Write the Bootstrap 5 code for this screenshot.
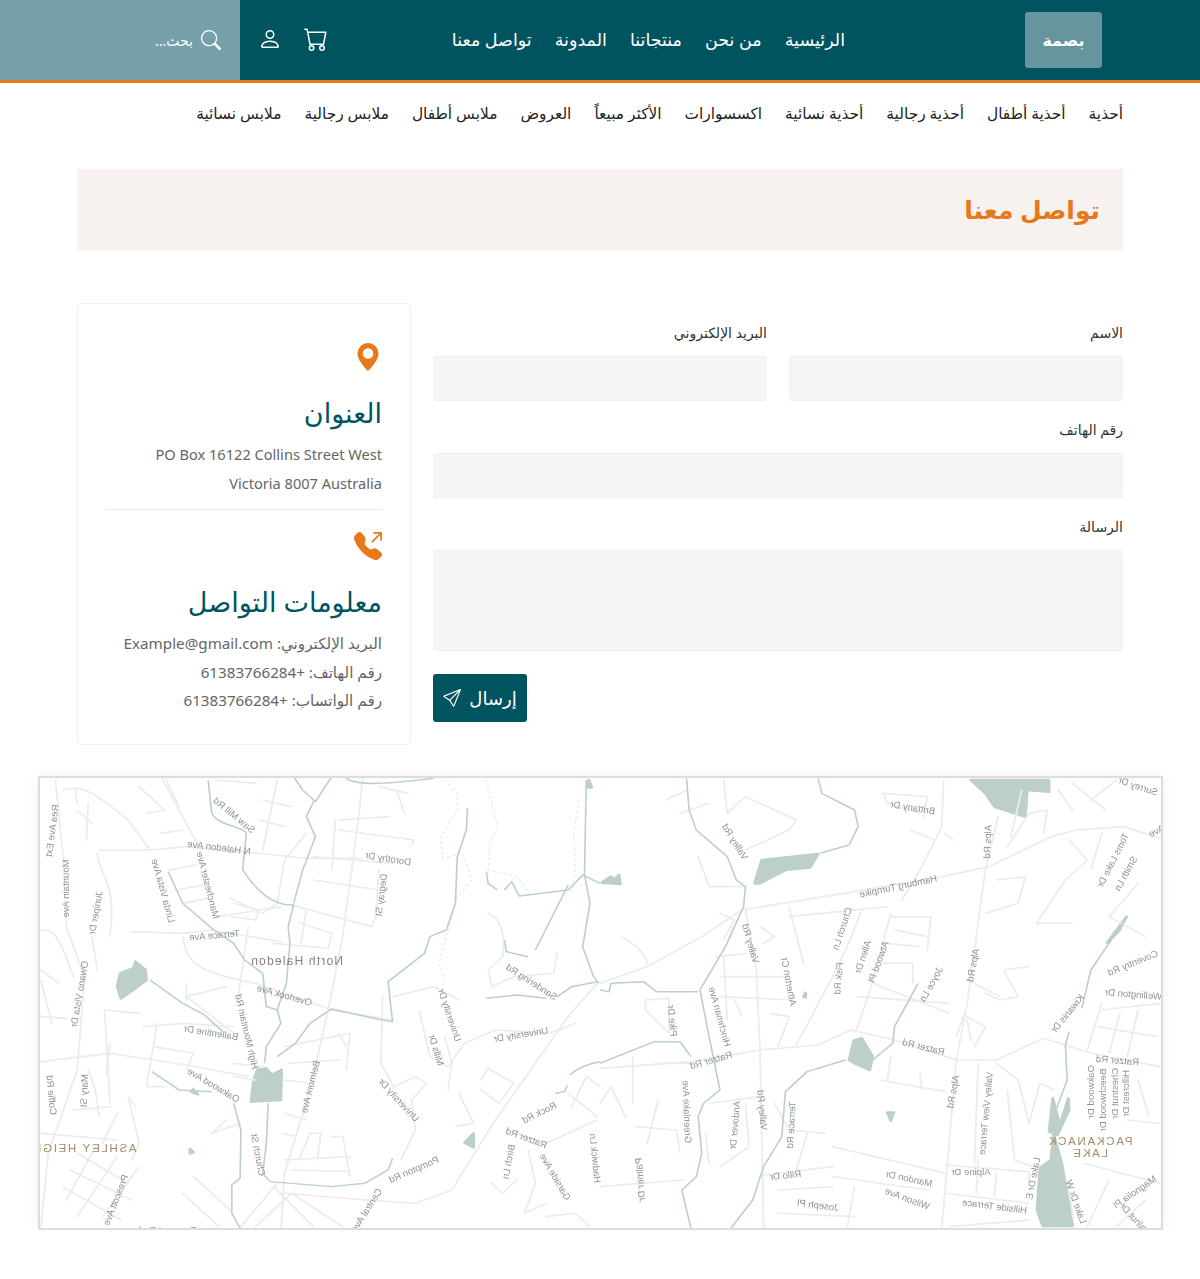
<!DOCTYPE html>
<html lang="ar" dir="rtl">
<head>
    <meta charset="UTF-8">
    <meta name="viewport" content="width=device-width, initial-scale=1.0">
    <title>تواصل معنا</title>
    <link href="https://cdn.jsdelivr.net/npm/bootstrap@5.3.0/dist/css/bootstrap.min.css" rel="stylesheet">
    <style>
        body { font-family: "Noto Sans", "DejaVu Sans", sans-serif; color: #222; background: #fff; }
        a { text-decoration: none; color: inherit; }

        .top-bar { height: 83px; background: #00545f; border-bottom: 3px solid #e8791a; }
        .brand-btn { width: 77px; height: 56px; margin-right: 98px; background: #66959f; border-radius: 3px; color: #fff; font-weight: 700; font-size: 16px; }
        .main-links { margin-right: 180px; gap: 23px; color: #fff; font-size: 17.5px; padding-bottom: 2px; }
        .top-icons { margin-right: auto; gap: 22px; padding-left: 18px; padding-bottom: 3px; color: #fff; }
        .search-box { width: 240px; height: 80px; background: #76a0aa; color: #fff; font-size: 14px; padding-right: 19px; gap: 8px; }

        .sub-links { height: 60px; padding: 2px 77px 0; gap: 23px; font-size: 15.4px; color: #222; }

        .page-wrap { width: 1046px; margin: 26px auto 0; }
        .title-band { height: 82px; background: #f7f2ef; padding: 0 23px 2px; margin-bottom: 52px; }
        .title-band h2 { color: #e8791a; font-size: 25px; font-weight: 700; margin: 0; }

        .gap-row { --bs-gutter-x: 22px; --bs-gutter-y: 0; }
        .form-side { padding-top: 20px; }
        .field-label { font-size: 14px; color: #333; margin-bottom: 13px; line-height: 20px; display: block; }
        .field-input { height: 45px; background: #f5f5f5; border: 1px solid #f0f0f0; border-radius: 3px; margin-bottom: 19px; }
        .field-area { height: 101px; resize: none; }
        .send-btn { width: 94px; height: 48px; background: #00545f; color: #fff; font-size: 18px; border-radius: 3px; border: 0; gap: 8px; margin-top: 4px; }

        .info-box { height: 442px; border: 1px solid #f1f1f1; border-radius: 4px; padding: 39px 28px 0; }
        .info-box h4 { color: #00545f; font-size: 27px; font-weight: 400; margin: 0 0 9px; line-height: 36px; }
        .info-box p { color: #666; font-size: 14.6px; line-height: 28.5px; margin: 0; }
        .info-box p.contact-line { font-size: 15.2px; }
        .info-icon { display: block; fill: #e8791a; margin-bottom: 24px; }
        .info-line { border-top: 1px solid #ebebeb; margin: 12px 0 22px; }

        .map-frame { width: 1125px; height: 454px; margin: 31px auto 0; border: 2px solid #ddd; box-shadow: 0 0 12px rgba(0, 0, 0, .06); overflow: hidden; }
        .map-frame svg { display: block; direction: ltr; filter: blur(.3px); }
        .m-road path { fill: none; stroke: #e9edeb; stroke-width: 5; stroke-linejoin: round; stroke-linecap: round; }
        .m-stream path { fill: none; stroke: #bcd0cb; stroke-width: 4.5; stroke-linejoin: round; }
        .m-trail path { fill: none; stroke: #e4e9e7; stroke-width: 3; stroke-dasharray: 9 7; }
        .m-water path { fill: #bccfca; stroke: #bccfca; stroke-width: 8; stroke-linejoin: round; }
        .m-label text { font-family: "Liberation Sans", sans-serif; font-size: 9.6px; fill: #8f9493; text-anchor: middle; dominant-baseline: central; }
        .m-label text.m-town { font-size: 12px; letter-spacing: 1.2px; fill: #8a8177; }
        .m-label text.m-area { font-size: 11.5px; letter-spacing: 1.7px; fill: #a58a6c; }
        .m-label text.m-clip { text-anchor: start; }
    </style>
</head>
<body>
    <header class="top-bar d-flex align-items-center">
        <a href="#" class="brand-btn d-flex align-items-center justify-content-center flex-shrink-0">بصمة</a>
        <nav class="main-links d-flex">
            <a href="#">الرئيسية</a>
            <a href="#">من نحن</a>
            <a href="#">منتجاتنا</a>
            <a href="#">المدونة</a>
            <a href="#">تواصل معنا</a>
        </nav>
        <div class="top-icons d-flex align-items-center">
            <svg width="24" height="24" viewBox="0 0 16 16" fill="currentColor"><path d="M0 1.5A.5.5 0 0 1 .5 1H2a.5.5 0 0 1 .485.379L2.89 3H14.5a.5.5 0 0 1 .491.592l-1.5 8A.5.5 0 0 1 13 12H4a.5.5 0 0 1-.491-.408L2.01 3.607 1.61 2H.5a.5.5 0 0 1-.5-.5zM3.102 4l1.313 7h8.17l1.313-7H3.102zM5 12a2 2 0 1 0 0 4 2 2 0 0 0 0-4zm7 0a2 2 0 1 0 0 4 2 2 0 0 0 0-4zm-7 1a1 1 0 1 1 0 2 1 1 0 0 1 0-2zm7 0a1 1 0 1 1 0 2 1 1 0 0 1 0-2z"/></svg>
            <svg width="24" height="24" viewBox="0 0 16 16" fill="currentColor"><path d="M8 8a3 3 0 1 0 0-6 3 3 0 0 0 0 6zm2-3a2 2 0 1 1-4 0 2 2 0 0 1 4 0zm4 8c0 1-1 1-1 1H3s-1 0-1-1 1-4 6-4 6 3 6 4zm-1-.004c-.001-.246-.154-.986-.832-1.664C11.516 10.68 10.289 10 8 10c-2.29 0-3.516.68-4.168 1.332-.678.678-.83 1.418-.832 1.664h10z"/></svg>
        </div>
        <div class="search-box d-flex align-items-center flex-shrink-0">
            <svg width="20" height="20" viewBox="0 0 16 16" fill="currentColor"><path d="M11.742 10.344a6.5 6.5 0 1 0-1.397 1.398h-.001c.03.04.062.078.098.115l3.85 3.85a1 1 0 0 0 1.415-1.414l-3.85-3.85a1.007 1.007 0 0 0-.115-.1zM12 6.5a5.5 5.5 0 1 1-11 0 5.5 5.5 0 0 1 11 0z"/></svg>
            <span>بحث...</span>
        </div>
    </header>

    <nav class="sub-links d-flex align-items-center">
        <a href="#">أحذية</a>
        <a href="#">أحذية أطفال</a>
        <a href="#">أحذية رجالية</a>
        <a href="#">أحذية نسائية</a>
        <a href="#">اكسسوارات</a>
        <a href="#">الأكثر مبيعاً</a>
        <a href="#">العروض</a>
        <a href="#">ملابس أطفال</a>
        <a href="#">ملابس رجالية</a>
        <a href="#">ملابس نسائية</a>
    </nav>

    <main class="page-wrap">
        <div class="title-band d-flex align-items-center">
            <h2>تواصل معنا</h2>
        </div>

        <div class="row gap-row">
            <div class="col-8">
                <form class="form-side">
                    <div class="row gap-row">
                        <div class="col-6">
                            <label class="field-label">الاسم</label>
                            <input class="form-control field-input" type="text">
                        </div>
                        <div class="col-6">
                            <label class="field-label">البريد الإلكتروني</label>
                            <input class="form-control field-input" type="email">
                        </div>
                        <div class="col-12">
                            <label class="field-label">رقم الهاتف</label>
                            <input class="form-control field-input" type="text">
                        </div>
                        <div class="col-12">
                            <label class="field-label">الرسالة</label>
                            <textarea class="form-control field-input field-area"></textarea>
                        </div>
                    </div>
                    <button type="button" class="send-btn d-flex align-items-center justify-content-center me-auto">
                        <span>إرسال</span>
                        <svg width="18" height="18" viewBox="0 0 16 16" fill="currentColor"><path d="M15.854.146a.5.5 0 0 1 .11.54l-5.819 14.547a.75.75 0 0 1-1.329.124l-3.178-4.995L.643 7.184a.75.75 0 0 1 .124-1.33L15.314.037a.5.5 0 0 1 .54.11ZM6.636 10.07l2.761 4.338L14.13 2.576 6.636 10.07Zm6.787-8.201L1.591 6.602l4.339 2.76 7.494-7.493Z"/></svg>
                    </button>
                </form>
            </div>
            <div class="col-4">
                <div class="info-box">
                    <svg class="info-icon" width="28" height="28" viewBox="0 0 16 16"><path d="M8 16s6-5.686 6-10A6 6 0 0 0 2 6c0 4.314 6 10 6 10zm0-7a3 3 0 1 1 0-6 3 3 0 0 1 0 6z"/></svg>
                    <h4>العنوان</h4>
                    <p dir="ltr" class="text-end">PO Box 16122 Collins Street West</p>
                    <p dir="ltr" class="text-end">Victoria 8007 Australia</p>
                    <div class="info-line"></div>
                    <svg class="info-icon" width="28" height="28" viewBox="0 0 16 16"><path d="M1.885.511a1.745 1.745 0 0 1 2.61.163L6.29 2.98c.329.423.445.974.315 1.494l-.547 2.19a.678.678 0 0 0 .178.643l2.457 2.457a.678.678 0 0 0 .644.178l2.189-.547a1.745 1.745 0 0 1 1.494.315l2.306 1.794c.829.645.905 1.87.163 2.611l-1.034 1.034c-.74.74-1.846 1.065-2.877.702a18.634 18.634 0 0 1-7.01-4.42 18.634 18.634 0 0 1-4.42-7.009c-.362-1.03-.037-2.137.703-2.877L1.885.511zM11 .5a.5.5 0 0 1 .5-.5h4a.5.5 0 0 1 .5.5v4a.5.5 0 0 1-1 0V1.707l-4.146 4.147a.5.5 0 0 1-.708-.708L14.293 1H11.5a.5.5 0 0 1-.5-.5z"/></svg>
                    <h4>معلومات التواصل</h4>
                    <p class="contact-line">البريد الإلكتروني: Example@gmail.com</p>
                    <p class="contact-line">رقم الهاتف: +61383766284</p>
                    <p class="contact-line">رقم الواتساب: +61383766284</p>
                </div>
            </div>
        </div>
    </main>

    <div class="map-frame">
        <svg id="mapSvg" width="1121" height="450" viewBox="40 778 1121 450">
            <!-- left half, traced from the crop: x at 2.75x, y at 3x -->
            <g transform="translate(30 770) scale(.3636 .3333)">
                <g class="m-water">
                    <path d="M290 575 L318 600 L320 630 L290 655 L250 685 L240 650 L248 610 L285 595Z"/>
                    <path d="M625 900 L650 895 L665 915 L692 900 L690 990 L608 995 L615 930Z"/>
                    <path d="M1220 1090 L1220 1132 L1195 1118Z"/>
                    <path d="M440 1137 L450 1147 L440 1150Z"/>
                    <path d="M448 958 L462 973 L444 966Z"/>
                    <path d="M1537 30 L1545 52 L1532 52Z"/>
                </g>
                <g class="m-road">
                    <path d="M915 20 L905 130 L860 500 L820 720 L770 960 L700 1210 L690 1380"/>
                    <path d="M1560 640 L1480 740 L1280 1050 L1160 1260 L1060 1300 L920 1290 L700 1270"/>
                    <path d="M90 60 C150 40 190 80 270 150 L330 240 L430 230 L610 248 L760 265 L910 265"/>
                    <path d="M190 240 L330 240 M185 250 C190 320 240 330 220 500"/>
                    <path d="M70 30 L90 250 L100 470 L150 620 L130 900 L50 1150 L30 1370"/>
                    <path d="M30 480 C70 470 90 530 120 620"/>
                    <path d="M280 485 L420 490 L500 480 L690 515"/>
                    <path d="M420 500 C430 590 480 610 620 640 L830 720 L1000 750"/>
                    <path d="M210 720 L300 730 M205 720 L220 1000"/>
                    <path d="M30 875 L220 850 L430 885 L600 920"/>
                    <path d="M310 770 L420 760 L560 770 M560 790 L430 680 L540 650 M430 640 L430 690"/>
                    <path d="M350 760 L320 950 L370 950"/>
                    <path d="M30 1090 L240 1110 M300 50 L370 120 L320 130 M360 20 L470 240 M680 30 L640 240"/>
                    <path d="M850 150 L990 140 M850 180 L1055 210 L1050 225 M780 260 L1000 280 M840 150 L830 300 M780 330 L960 360"/>
                    <path d="M720 405 L940 470 L950 440 L960 300 M760 420 L745 520 M745 460 L830 490 L820 535 L670 520"/>
                    <path d="M760 190 L700 270 L680 400 L640 430 L550 385 M560 400 L630 420 L620 450 L555 440"/>
                    <path d="M380 300 L460 285 M400 360 L480 345 M420 400 L490 385 M520 440 L690 410 M600 470 L570 700"/>
                    <path d="M180 1130 L100 1290 M240 1160 L130 1340 M300 1190 L200 1340 M110 1200 L280 1290 M130 1150 L270 1240 M90 1250 L250 1350"/>
                    <path d="M700 1170 L880 1160 M720 1200 L880 1205 M770 1090 L740 1170 M770 1090 L800 1090 L790 1170 M830 1100 L860 1100 L880 1220"/>
                    <path d="M420 1270 L520 1370 M450 1220 L550 1320 M580 1370 L680 1240 M620 1370 L720 1270 M720 1270 L860 1370 M670 1250 L780 1370"/>
                    <path d="M700 830 L880 790 L870 900 M710 880 L850 870 M700 930 L780 940 M700 1030 L760 1050 M695 1090 L730 1100"/>
                    <path d="M560 880 L640 890 M560 920 L620 930 M500 1090 L580 1060 M290 1010 L270 980 L300 1120 L280 1170"/>
                    <path d="M970 680 L965 880 L1000 950 L1060 920 L1090 940 L1050 990 L1060 1080 L1020 1170 M1000 680 L1110 650 L1180 690"/>
                    <path d="M1070 720 L1100 860 L1150 890 L1195 820 L1280 780 L1430 790 L1500 760 M1140 800 L1160 880 L1150 960"/>
                    <path d="M1240 930 L1260 895 L1330 940 L1290 1000 L1240 960 M1180 970 L1220 1060 L1170 1070 M1310 1080 L1420 1120 L1560 1050"/>
                    <path d="M1270 1240 L1300 1270 L1340 1230 M1370 1140 L1390 1240 L1360 1330 L1420 1300 M1420 1340 L1500 1330 L1540 1370"/>
                    <path d="M1490 1010 L1530 920 L1568 950 M1480 970 L1560 1040 M1260 430 C1290 440 1310 490 1300 560 L1260 600 L1270 650 L1330 620 L1440 610 L1450 550"/>
                    <path d="M130 100 L125 60 M130 120 L170 160 M160 100 L155 210 M360 190 L420 180 M30 600 L80 640 M30 630 L60 760 M30 740 L100 745 M170 500 L185 600"/>
                    <path d="M160 900 L180 960 L190 1040 M120 1020 L220 1010 M240 1030 L200 1120 M220 820 L210 910 M340 830 L450 850 L430 900 M500 1090 L540 1050"/>
                    <path d="M370 20 L410 110 M510 30 L620 40 M640 90 L720 110 M630 150 L700 170 M1010 70 L1030 130 M960 50 L1040 70 M850 790 L870 830"/>
                </g>
                <g class="m-trail">
                    <path d="M1140 30 L1175 70 L1175 120 L1130 200 L1135 265 L1190 250 L1215 330 L1175 380 L1125 580 L1145 640"/>
                    <path d="M1255 30 L1285 170 L1265 220 L1260 300 L1340 320 L1375 370"/>
                    <path d="M1510 90 L1495 190 L1500 290 L1490 370"/>
                </g>
                <g class="m-stream">
                    <path d="M490 30 L500 130 C520 170 590 170 595 190 L585 300 C620 360 670 410 725 405 L710 470 L715 520 L705 640 L680 720 L690 760 L650 830 L645 880"/>
                    <path d="M780 95 L760 140 L785 200 L750 300 L725 400"/>
                    <path d="M830 20 L785 95 L750 60 L725 20"/>
                    <path d="M870 25 C900 50 1000 40 1110 25"/>
                    <path d="M1203 115 L1200 180 L1175 260 L1170 400 L1145 480 L1100 500 L1085 550 L985 635 L997 755 L945 745 L830 717 L770 760 L730 820 L680 860"/>
                    <path d="M330 630 L420 700 L480 735 L530 785"/>
                    <path d="M335 905 L410 960 L500 965"/>
                    <path d="M380 305 L420 400 L500 475 L560 520 L590 570 L640 610 L650 710 L680 720"/>
                    <path d="M560 1000 L580 1080 L578 1225 M655 1000 L650 1120 L640 1210 L660 1235 L830 1250 L920 1240 L985 1200 L997 1165"/>
                    <path d="M578 1225 L555 1245 L555 1330 L578 1375"/>
                    <path d="M1255 305 L1260 340 L1285 360 M1305 360 L1325 335 L1345 378 L1480 360 L1520 315 L1568 340"/>
                    <path d="M1480 345 L1390 540 M1305 510 L1310 545 L1370 560"/>
                    <path d="M1530 30 L1525 315 L1540 400 L1520 530 L1550 620 L1565 640"/>
                    <path d="M1255 685 L1340 675 L1420 685 M1450 680 L1490 650 L1560 635"/>
                    <path d="M1485 915 C1510 890 1540 880 1568 875 M1445 970 L1470 965 L1478 945"/>
                </g>
            </g>
            <!-- right half -->
            <g transform="translate(600 770) scale(.3636 .3333)">
                <g class="m-water">
                    <path d="M1020 30 L1235 30 L1235 65 L1175 60 L1170 140 L1085 110 L1060 70Z"/>
                    <path d="M425 340 L445 270 L600 252 L578 292 L510 300 L440 340Z"/>
                    <path d="M685 870 L698 812 L720 805 L750 860 L742 900 L700 880Z"/>
                    <path d="M790 1028 L808 1028 L800 1052Z"/>
                    <path d="M1245 985 L1235 1085 L1258 1095 L1290 1020 L1288 985 L1265 1065Z"/>
                    <path d="M1248 1095 L1270 1180 L1300 1368 L1218 1368 L1202 1320 L1210 1195 L1240 1170Z"/>
                    <path d="M1448 440 L1428 482 L1395 518Z"/>
                    <path d="M52 315 L56 342 L5 338 L30 320 L40 328Z"/>
                    <path d="M565 668 L566 682 L560 680Z"/>
                </g>
                <g class="m-road">
                    <path d="M0 640 L130 590 L280 500 L390 420 L700 365 L940 320 L1070 290 L1240 200 L1310 180 L1440 170 L1540 205"/>
                    <path d="M0 895 L250 875 L440 840 L600 825 L690 780 L810 810 L980 870 L1090 870 L1220 805 L1350 850 L1540 890"/>
                    <path d="M1095 140 L1060 300 L1010 700 L980 870 L940 1375"/>
                    <path d="M400 420 L430 600 L440 840 L445 1100 L450 1375"/>
                    <path d="M945 30 L940 170 L880 300 L830 390"/>
                    <path d="M800 430 L740 670 L705 780 M720 420 L680 530 L640 620 L540 825"/>
                    <path d="M520 410 L560 580 M520 440 L790 410"/>
                    <path d="M800 440 L910 440 L900 540 M810 480 L900 500 M790 520 L880 530 M775 580 L860 580 L860 640 M750 640 L960 730 M710 680 L960 700"/>
                    <path d="M340 30 L350 130 L400 80 L540 150 L520 180 L400 240 M220 130 L300 100 M180 90 L240 60 M270 260 L300 350 L400 350"/>
                    <path d="M60 500 C90 520 120 540 130 580 M330 430 L370 450 L340 510 M440 470 L480 500 L450 520"/>
                    <path d="M320 560 L400 550 M330 620 L520 620 M330 680 L530 690 M340 560 L350 750 M470 730 L520 740 L490 830 M370 690 L390 740"/>
                    <path d="M125 690 L190 685 L190 790 L125 720Z M90 860 L90 1000 M160 880 L260 880 M0 1000 L30 950 L70 1040 M100 1070 L210 1080 L220 1150"/>
                    <path d="M0 1250 L230 1230 M100 1170 L110 1300 M160 990 L130 1120 M300 1000 L440 980 M290 1090 L300 1180 M400 1000 L410 1130 L330 1190"/>
                    <path d="M480 1000 L520 1080 L620 1090 M640 1130 L950 1210 M770 930 L950 965 M800 860 L790 930 M880 910 L885 960"/>
                    <path d="M450 1215 L640 1190 M640 1220 L900 1260 M490 1260 L640 1250 M490 1330 L700 1340 M700 1250 L680 1370 M570 1090 L540 1200"/>
                    <path d="M950 1185 L1180 1205 L1180 1230 M950 1270 L1180 1300 M1040 1170 L1035 1270 M1090 1210 L1085 1280 M960 1370 L1180 1350"/>
                    <path d="M1040 880 L1030 1180 M1090 880 L1150 930 L1180 1060 L1210 940 L1250 960 M1120 960 L1140 1170 L1190 1190"/>
                    <path d="M980 800 L1000 735 L1060 770 L1030 830 M1010 750 L1020 810 M1060 670 L1100 690 L1150 680 L1110 600 L1180 590 M1010 630 L1100 680"/>
                    <path d="M1120 230 L1180 130 L1230 120 L1220 190 M1090 330 L1170 320 L1150 400 L1060 430 M1300 120 L1260 60 M1290 210 L1340 270 L1280 330 L1200 460 L1300 460"/>
                    <path d="M1380 720 L1540 700 M1380 700 L1340 840 M1430 730 L1400 850 M1480 720 L1450 860 M1370 770 L1530 800 M1500 500 L1400 440 L1480 340"/>
                    <path d="M1480 930 L1510 1040 M1450 1050 L1540 1060 M1330 1180 L1540 1240 M1340 1370 L1400 1230 M1420 1370 L1500 1290 M1290 1240 L1300 1340 M1380 190 L1350 300"/>
                    <path d="M775 70 L900 80 L890 145 M780 70 L790 100 L880 130 M855 180 L920 210 M950 190 L970 210 M1160 60 L1130 200 M1300 40 L1390 120 M1420 30 L1350 90"/>
                </g>
                <g class="m-stream">
                    <path d="M238 25 L245 120 L265 180 L350 260 L375 330 L400 350 L395 410 L345 530 L275 660 L300 800 L330 960 L285 1000 L270 1040 L280 1150 L265 1220 L225 1260 L250 1375"/>
                    <path d="M600 25 L610 70 L700 120 L710 170 L685 225 L605 250"/>
                    <path d="M0 660 L25 665 L30 640 L120 635 L155 665 L270 665"/>
                    <path d="M0 880 L150 815 L220 815 L250 860 M875 640 L810 770 L805 820 L750 870"/>
                    <path d="M675 870 L570 905 L510 965 L500 1100 L450 1190 L420 1290 L360 1375"/>
                    <path d="M1450 440 L1350 600 L1325 715 M1290 785 L1280 825 L1285 930 L1240 1060"/>
                </g>
            </g>
            <g id="mapLabels" class="m-label"></g>
        </svg>
    </div>

    <script src="https://cdn.jsdelivr.net/npm/bootstrap@5.3.0/dist/js/bootstrap.bundle.min.js"></script>
    <script>
        // the map in the reference is flipped, so its labels are mirrored: [text, x, y, angle, class]
        const leftLabels = [
            ['Rea Ave Ext', 60, 182, -83], ['Mountain Ave', 97, 355, -90], ['Saw Mill Rd', 562, 135, 42],
            ['N Haledon Ave', 520, 232, 7.5], ['Linda Vista Ave', 367, 362, 76], ['Manchester Ave', 490, 345, 77],
            ['Juniper Dr', 180, 428, -81], ['Dorothy Dr', 985, 265, 10], ['Degray St', 965, 375, -83],
            ['Terrace Ave', 507, 495, -5], ['North Haledon', 733, 574, 0, 'm-town'], ['Overlook Ave', 700, 675, 17],
            ['Owano Vista Dr', 135, 672, -81], ['High Mountain Rd', 597, 785, 78], ['Ballentine Dr', 498, 787, 10],
            ['University Dr', 1155, 735, 73], ['University Dr', 1350, 793, -10], ['Mills Dr', 1118, 840, 75],
            ['Sandering Rd', 1380, 635, 35], ['Oakwood Ave', 505, 945, 33], ['Belmont Ave', 770, 950, -77],
            ['University Dr', 1015, 990, 50], ['Coffie Rd', 60, 975, 85], ['Mary St', 148, 962, -88],
            ['ASHLEY HEIGHTS', 293, 1133, 0, 'm-area m-clip'], ['Church St', 628, 1155, 80], ['Pompton Rd', 1055, 1198, -25],
            ['Rock Rd', 1400, 1027, -28], ['Ratzer Rd', 1365, 1103, 22], ['Birch Ln', 1315, 1175, -80],
            ['Garside Ave', 1445, 1220, 62], ['Prescott Ave', 235, 1290, -70], ['Central Ave', 925, 1320, -60],
            ['Hadwick Ln', 1555, 1165, 85], ['Prospect Park', 375, 1378, 0]
        ];
        const rightLabels = [
            ['Surrey Dr', 1480, 48, 20], ['Brittany Dr', 860, 112, 10], ['Alps Rd', 1065, 215, -88],
            ['Valley Rd', 372, 215, 60], ['Hamburg Turnpike', 820, 348, -13], ['Toms Lake Dr', 1410, 270, -65],
            ['Smith Ln', 1445, 310, -63], ['Ave', 1530, 182, -30], ['Church Ln', 665, 475, -73],
            ['Valley Rd', 415, 520, 75], ['Allen Dr', 722, 560, -73], ['Atwood Pl', 765, 575, -72],
            ['Fisk Rd', 655, 625, -85], ['Atherton Ct', 520, 635, 80], ['Joyce Ln', 910, 642, -63],
            ['Alps Rd', 1025, 585, -80], ['Coventry Rd', 1465, 578, -24], ['Wellington Dr', 1467, 672, 5],
            ['Kiwanis Dr', 1285, 730, -53], ['Pike Dr', 200, 752, 85], ['Hinchman Ave', 330, 740, 76],
            ['Ratzer Rd', 305, 870, -17], ['Ratzer Rd', 890, 830, 15], ['Ratzer Rd', 1423, 870, 5],
            ['Greenlake Ave', 240, 1025, 88], ['Andover Dr', 370, 1065, -85], ['Valley Rd', 447, 1020, 85],
            ['Terrace Rd', 525, 1065, -87], ['Alps Rd', 970, 965, -80], ['Valley View Terrace', 1060, 1030, -85],
            ['Oakwood Dr', 1350, 965, -90], ['Beechwood Dr', 1382, 990, -90], ['Chestnut Dr', 1415, 970, -90],
            ['Hillcrest Dr', 1445, 970, -90], ['PACKANACK', 1347, 1113, 0, 'm-area'], ['LAKE', 1347, 1150, 0, 'm-area'],
            ['Lake Dr E', 1190, 1225, -80], ['Lake Dr W', 1310, 1295, 72], ['Magnolia Pl', 1470, 1265, -37],
            ['Rillo Dr', 510, 1215, -7], ['Mandon Dr', 850, 1225, 13], ['Alpine Dr', 1020, 1205, 0],
            ['Wilson Ave', 845, 1285, 22], ['Joseph Pl', 600, 1305, 8], ['Hillside Terrace', 1085, 1308, 8],
            ['Palmer Dr', 110, 1228, -94], ['Walnut Dr', 1475, 1350, 50]
        ];
        const labelGroup = document.getElementById('mapLabels');

        function addLabels(list, offsetX) {
            list.forEach(([text, x, y, angle, cls]) => {
                const rad = angle * Math.PI / 180;
                const pageAngle = Math.atan2(Math.sin(rad) / 3, Math.cos(rad) / 2.75) * 180 / Math.PI;
                const node = document.createElementNS('http://www.w3.org/2000/svg', 'text');
                node.textContent = text;
                if (cls) node.setAttribute('class', cls);
                node.setAttribute('transform', `translate(${offsetX + x / 2.75} ${770 + y / 3}) rotate(${pageAngle}) scale(-1 1)`);
                labelGroup.appendChild(node);
            });
        }

        addLabels(leftLabels, 30);
        addLabels(rightLabels, 600);
    </script>
</body>
</html>
